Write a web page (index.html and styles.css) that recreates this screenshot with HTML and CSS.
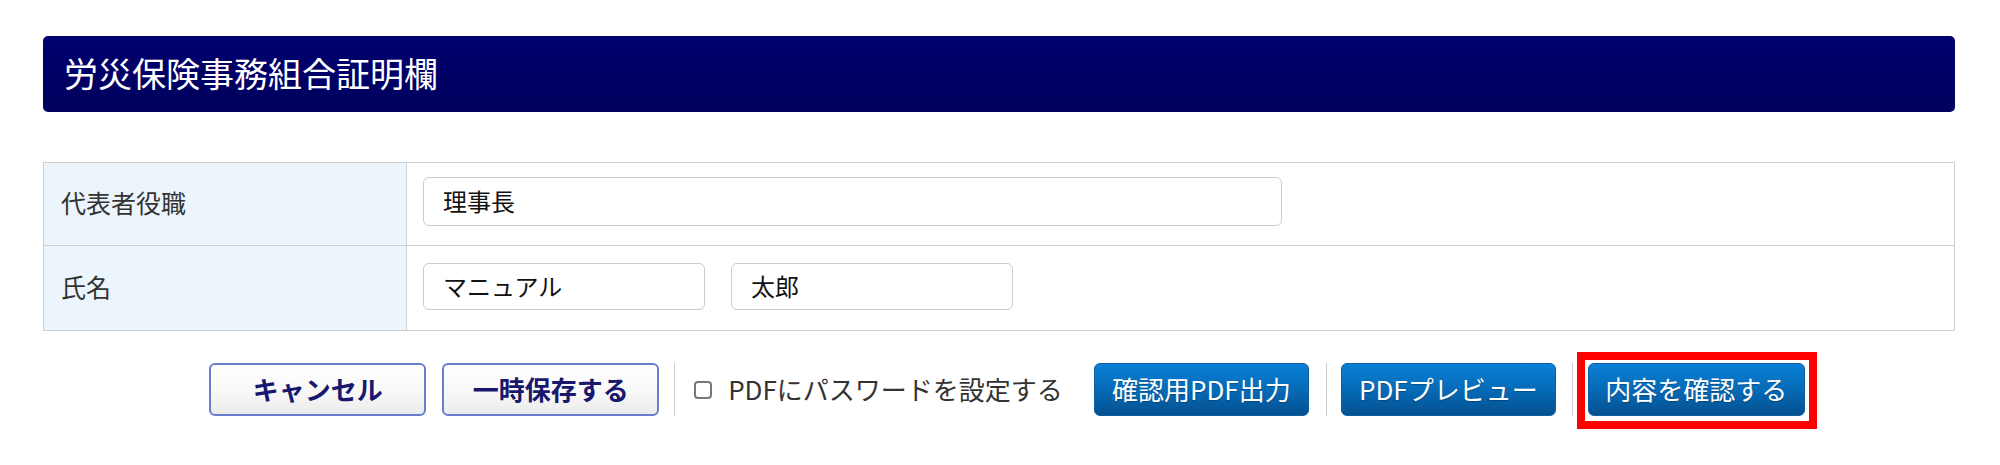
FILE: index.html
```html
<!DOCTYPE html>
<html lang="ja">
<head>
<meta charset="utf-8">
<title>労災保険事務組合証明欄</title>
<link rel="stylesheet" href="styles.css">
</head>
<body>
<div class="page">
  <h2 class="section-title">労災保険事務組合証明欄</h2>

  <table class="form-table">
    <tr class="row row-first">
      <th class="label">代表者役職</th>
      <td class="field">
        <input class="text-input wide" type="text" value="理事長">
      </td>
    </tr>
    <tr class="row row-second">
      <th class="label">氏名</th>
      <td class="field">
        <div class="name-group">
          <input class="text-input short" type="text" value="マニュアル">
          <input class="text-input short" type="text" value="太郎">
        </div>
      </td>
    </tr>
  </table>

  <div class="actions">
    <button class="btn btn-light">キャンセル</button>
    <button class="btn btn-light gap-s">一時保存する</button>
    <span class="sep sep-a"></span>
    <label class="check">
      <input class="check-box" type="checkbox">
      <span class="check-text">PDFにパスワードを設定する</span>
    </label>
    <button class="btn btn-blue btn-pdf">確認用PDF出力</button>
    <span class="sep sep-b"></span>
    <button class="btn btn-blue btn-preview">PDFプレビュー</button>
    <span class="sep sep-c"></span>
    <span class="highlight">
      <button class="btn btn-blue btn-confirm">内容を確認する</button>
    </span>
  </div>
</div>
</body>
</html>
```

FILE: styles.css
```css
* {
  box-sizing: border-box;
}

html, body {
  margin: 0;
  padding: 0;
  background: #ffffff;
}

body {
  font-family: "Noto Sans CJK JP", "Noto Sans", sans-serif;
  color: #333333;
}

.page {
  padding: 36px 45px 40px 43px;
}

.section-title {
  margin: 0;
  height: 76px;
  display: flex;
  align-items: center;
  padding: 0 0 4px 21px;
  border-radius: 5px;
  background: linear-gradient(to bottom, #000070 0%, #00005c 100%);
  color: #ffffff;
  font-size: 34px;
  font-weight: normal;
}

.form-table {
  width: 100%;
  margin-top: 50px;
  border-collapse: collapse;
  border: 1px solid #cfcfcf;
}

.row-first {
  height: 83px;
}

.row-second {
  height: 85px;
}

.label {
  width: 363px;
  background: #edf5fc;
  border: 1px solid #cfcfcf;
  text-align: left;
  font-weight: normal;
  font-size: 25px;
  color: #333333;
  padding: 0 0 4px 17px;
  vertical-align: middle;
}

.field {
  border: 1px solid #cfcfcf;
  padding: 0 0 0 16px;
  vertical-align: top;
}

.row-first .field {
  padding-top: 14px;
}

.row-second .field {
  padding-top: 17px;
}

.text-input {
  height: 49px;
  border: 1px solid #cccccc;
  border-radius: 6px;
  padding: 0 0 2px 19px;
  font-family: "Noto Sans CJK JP", "Noto Sans", sans-serif;
  font-size: 24px;
  color: #111111;
  background: #ffffff;
  outline: none;
  display: block;
}

.wide {
  width: 859px;
}

.name-group {
  display: flex;
  gap: 26px;
}

.short {
  width: 282px;
  height: 47px;
}

.actions {
  display: flex;
  align-items: center;
  justify-content: center;
  margin-top: 32px;
  padding-left: 16px;
}

.btn {
  height: 53px;
  border-radius: 6px;
  font-family: "Noto Sans CJK JP", "Noto Sans", sans-serif;
  font-size: 26px;
  line-height: 1;
  padding: 0 0 2px 0;
  cursor: pointer;
}

.btn-light {
  width: 217px;
  border: 2px solid #6a7cce;
  background: linear-gradient(to bottom, #ffffff 0%, #f8f8f8 55%, #ebebeb 100%);
  color: #17186e;
  font-weight: bold;
}

.gap-s {
  margin-left: 16px;
}

.btn-blue {
  width: 215px;
  border: 1px solid #0a5fa4;
  background: linear-gradient(to bottom, #0a80d6 0%, #066bb7 50%, #05508f 100%);
  color: #ffffff;
  font-weight: normal;
  text-shadow: 0 1px 1px rgba(0, 0, 0, 0.25);
}

.btn-confirm {
  width: 217px;
  display: block;
}

.sep {
  width: 1px;
  height: 53px;
  background: #cccccc;
}

.sep-a {
  margin-left: 15px;
}

.check {
  display: flex;
  align-items: center;
  margin-left: 19px;
}

.check-box {
  appearance: none;
  -webkit-appearance: none;
  width: 18px;
  height: 18px;
  margin: 0;
  border: 2px solid #777777;
  border-radius: 4px;
  background: #ffffff;
}

.check-text {
  margin-left: 16px;
  font-size: 26px;
  color: #333333;
  padding-bottom: 2px;
}

.btn-pdf {
  margin-left: 31px;
}

.sep-b {
  margin-left: 17px;
}

.btn-preview {
  margin-left: 14px;
}

.sep-c {
  margin-left: 16px;
}

.highlight {
  position: relative;
  margin-left: 15px;
  display: block;
}

.highlight::after {
  content: "";
  position: absolute;
  top: -11px;
  left: -11px;
  right: -12px;
  bottom: -13px;
  border: 8px solid #ff0000;
  pointer-events: none;
}
```
